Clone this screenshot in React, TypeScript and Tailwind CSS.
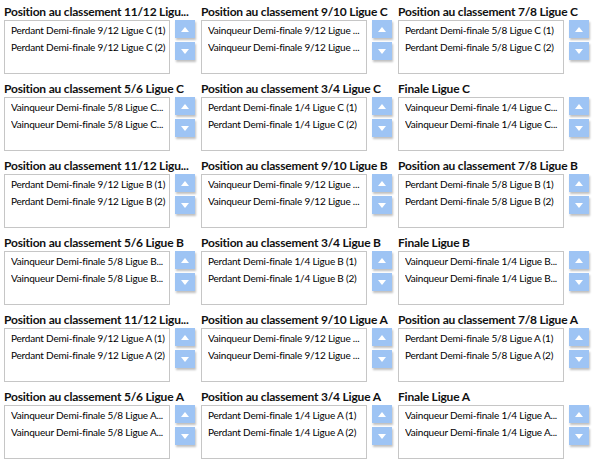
import React from "react";

type Cell = { title: string; items: string[] };

function rowsFor(l: string): Cell[][] {
  return [
    [
      { title: "Position au classement 11/12 Ligu...", items: [`Perdant Demi-finale 9/12 Ligue ${l} (1)`, `Perdant Demi-finale 9/12 Ligue ${l} (2)`] },
      { title: `Position au classement 9/10 Ligue ${l}`, items: ["Vainqueur Demi-finale 9/12 Ligue ...", "Vainqueur Demi-finale 9/12 Ligue ..."] },
      { title: `Position au classement 7/8 Ligue ${l}`, items: [`Perdant Demi-finale 5/8 Ligue ${l} (1)`, `Perdant Demi-finale 5/8 Ligue ${l} (2)`] },
    ],
    [
      { title: `Position au classement 5/6 Ligue ${l}`, items: [`Vainqueur Demi-finale 5/8 Ligue ${l}...`, `Vainqueur Demi-finale 5/8 Ligue ${l}...`] },
      { title: `Position au classement 3/4 Ligue ${l}`, items: [`Perdant Demi-finale 1/4 Ligue ${l} (1)`, `Perdant Demi-finale 1/4 Ligue ${l} (2)`] },
      { title: `Finale Ligue ${l}`, items: [`Vainqueur Demi-finale 1/4 Ligue ${l}...`, `Vainqueur Demi-finale 1/4 Ligue ${l}...`] },
    ],
  ];
}

const cells: Cell[] = [...rowsFor("C"), ...rowsFor("B"), ...rowsFor("A")].flat();

function Arrow({ up }: { up: boolean }) {
  return (
    <svg width="8" height="5" viewBox="0 0 8 5">
      {up ? <polygon points="0,5 8,5 4,0" fill="white" /> : <polygon points="0,0 8,0 4,5" fill="white" />}
    </svg>
  );
}

function Btn({ up }: { up: boolean }) {
  return (
    <div className="h-[18px] w-[20px] bg-[#9ec4f4] shadow-[1px_2px_2px_rgba(0,0,0,0.25)] flex items-center justify-center">
      <Arrow up={up} />
    </div>
  );
}

function CellView({ c }: { c: Cell }) {
  return (
    <div className="h-[77px] flex flex-col">
      <div className="h-[16px] leading-[16px] text-[12px] tracking-[-0.2px] font-bold text-[#111111] whitespace-nowrap overflow-hidden w-[194px]">{c.title}</div>
      <div className="flex flex-row mt-[0px]">
        <div className="w-[166px] h-[54px] border border-[#c6c6c6] bg-white pt-[1px] pl-[6px] overflow-hidden">
          {c.items.map((t, i) => (
            <div key={i} className="h-[17px] leading-[17px] text-[10px] tracking-[-0.2px] text-[#000000] whitespace-nowrap overflow-hidden">{t}</div>
          ))}
        </div>
        <div className="ml-[5px] flex flex-col gap-[4px]">
          <Btn up={true} />
          <Btn up={false} />
        </div>
      </div>
    </div>
  );
}

export default function App() {
  return (
    <div className="w-[596px] h-[466px] bg-white pl-[4px] pt-[4px] overflow-hidden" style={{ fontFamily: 'Lato, "Noto Sans", sans-serif' }}>
      <div className="grid grid-cols-[197px_197px_197px]">
        {cells.map((c, i) => (
          <CellView key={i} c={c} />
        ))}
      </div>
    </div>
  );
}
